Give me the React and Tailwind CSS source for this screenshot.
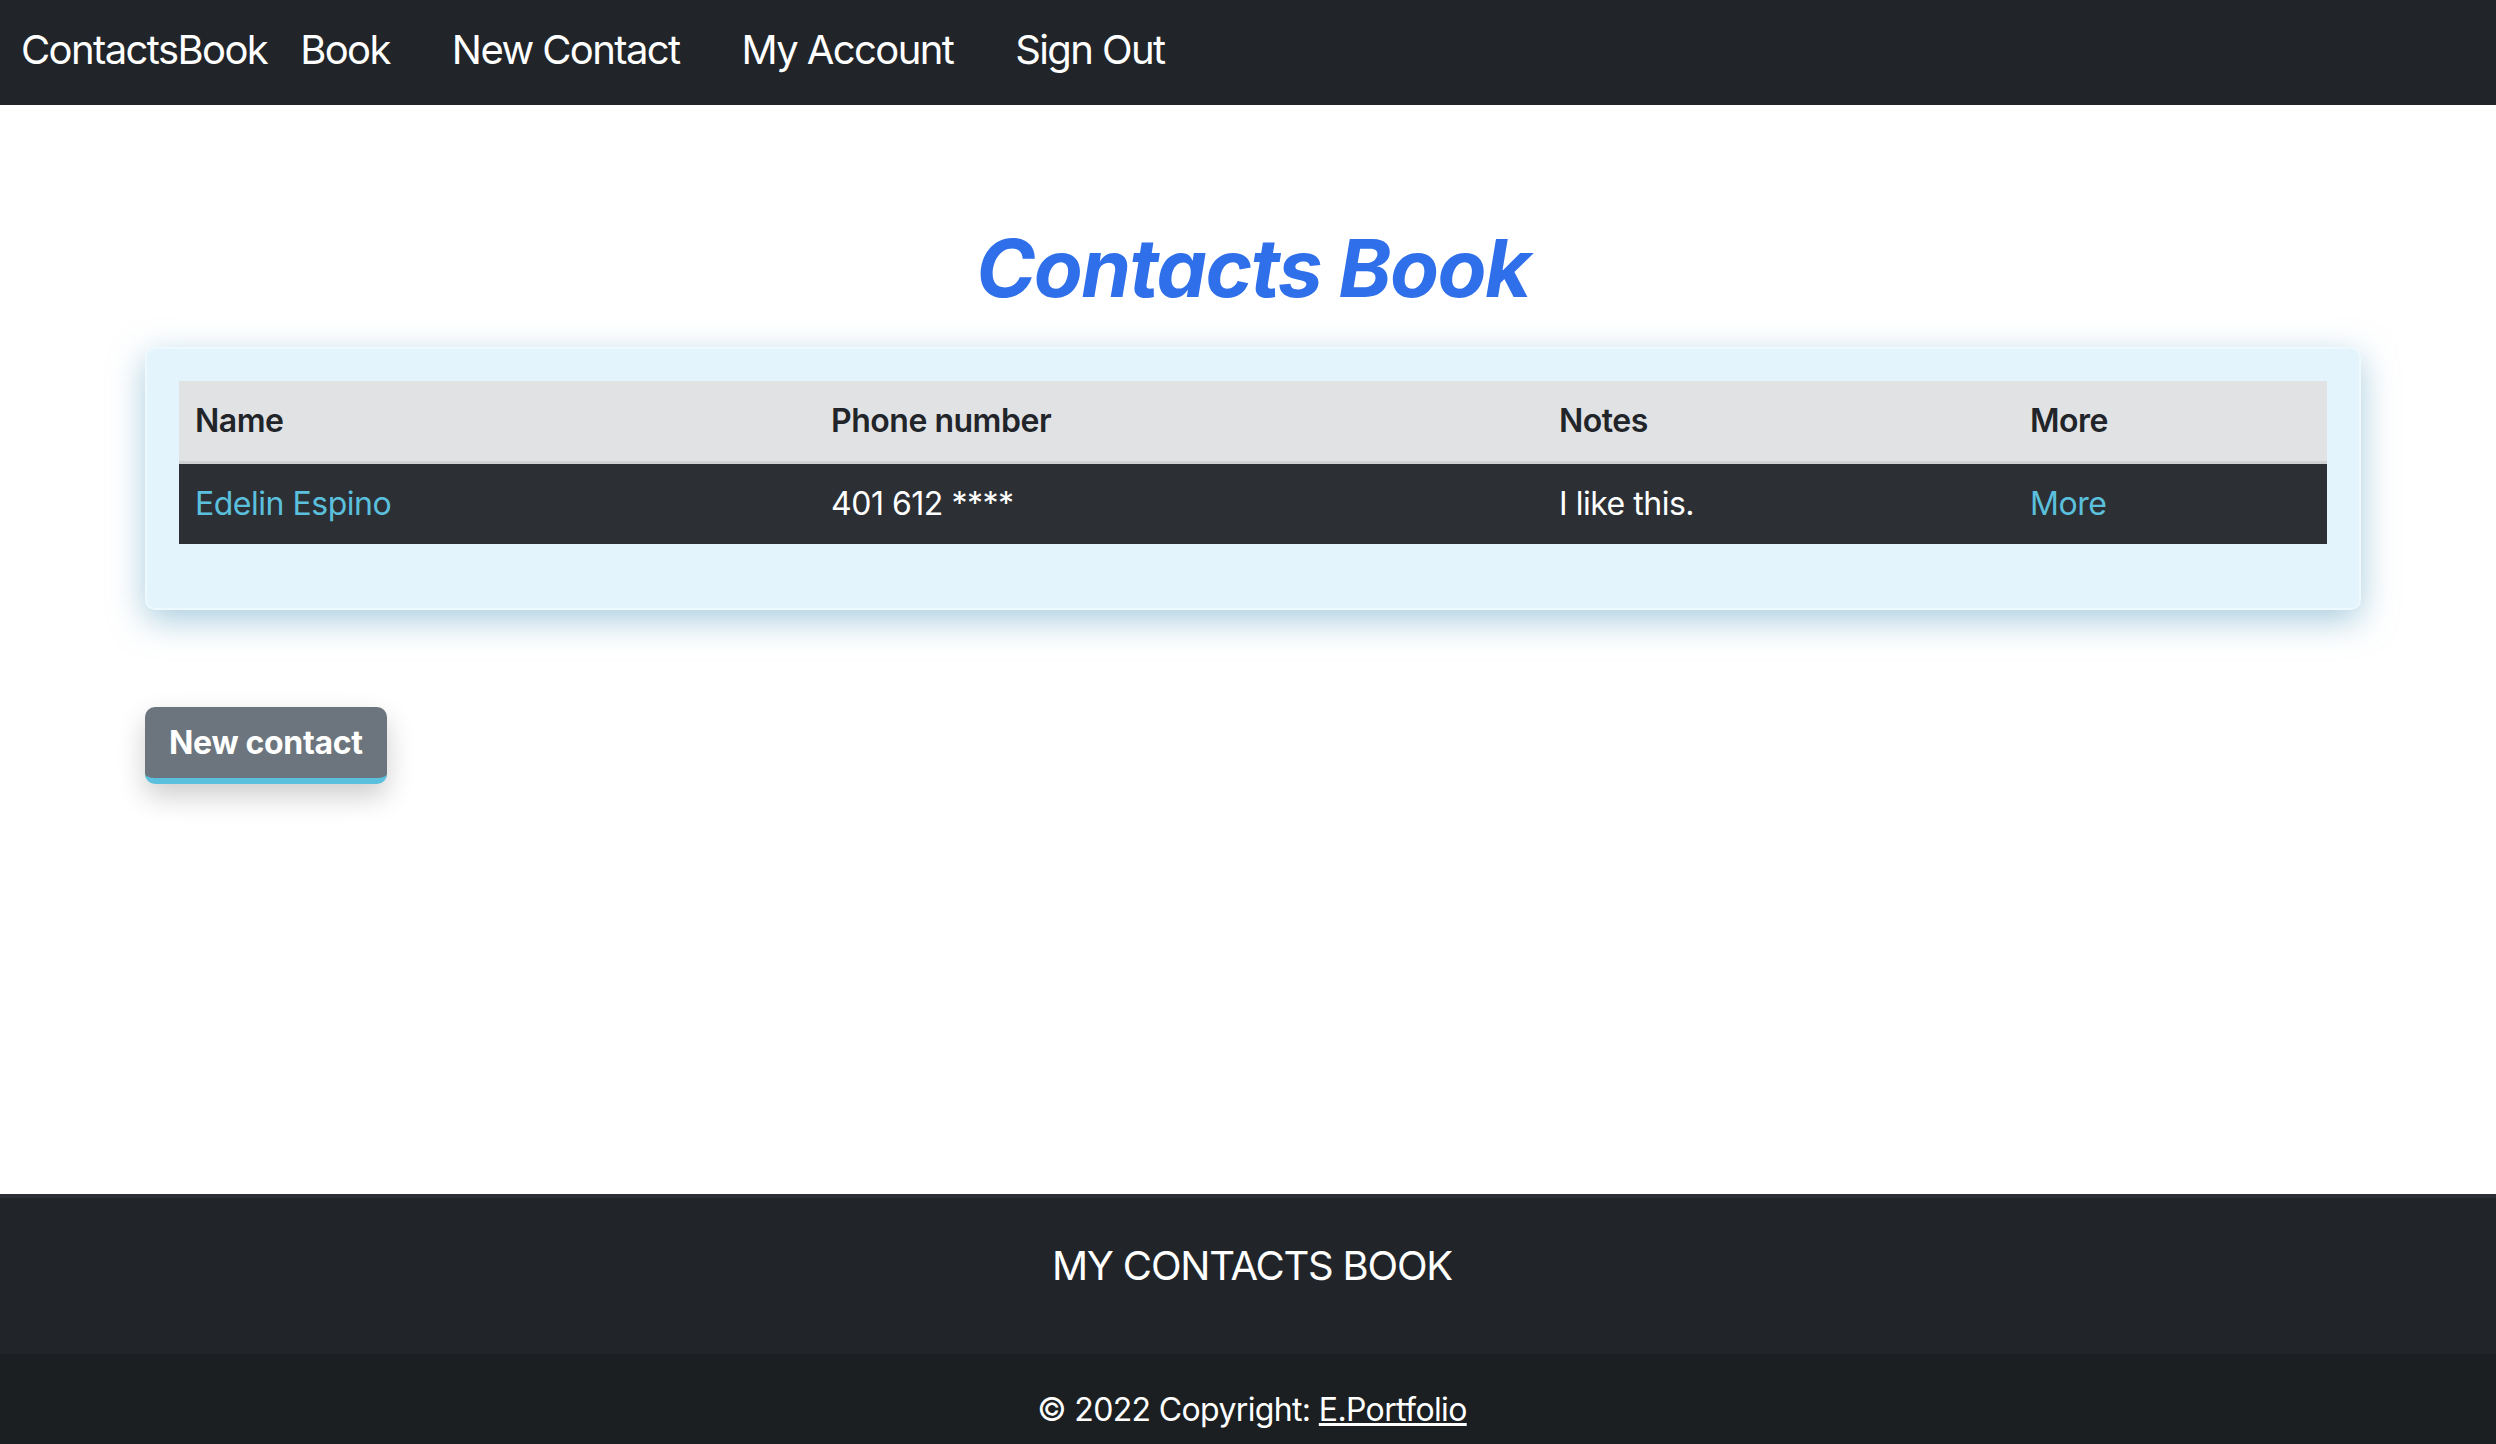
import React from "react";

const contacts = [
  { id: 1, name: "Edelin Espino", phone: "401 612 ****", notes: "I like this." },
];

export default function App() {
  return (
    <div className="min-h-screen bg-white font-['Inter','Liberation_Sans',sans-serif] text-[#212529]">
      <nav className="h-[105px] bg-[#212529] flex items-center pl-[21px] pb-[5px] text-white text-[40px] tracking-[-0.04em]">
        <a href="#" className="mr-[33px]">ContactsBook</a>
        <div className="flex items-center gap-[62px]">
          <a href="#">Book</a>
          <a href="#">New Contact</a>
          <a href="#">My Account</a>
          <a href="#">Sign Out</a>
        </div>
      </nav>

      <main className="min-h-[1089px] pt-[115px]">
        <div className="ml-[145px] w-[2216px]">
          <h1 className="text-center text-[80px] leading-[96px] font-bold italic text-[#2f6fea] tracking-[-0.02em]">
            Contacts Book
          </h1>

          <div className="mt-[31px] bg-[#e3f4fc] border-2 border-[#eef9fe] rounded-[10px] p-[32px] shadow-[0_10px_34px_rgba(110,170,200,0.6)]">
            <table className="w-full mb-[32px] text-[32px] leading-[48px] tracking-[-0.015em]">
              <thead>
                <tr className="bg-[#e1e2e4] border-b-[3px] border-[#cfd1d3]">
                  <th className="w-[636px] text-left font-semibold px-[16px] py-[16px]">Name</th>
                  <th className="w-[728px] text-left font-semibold px-[16px] py-[16px]">Phone number</th>
                  <th className="w-[471px] text-left font-semibold px-[16px] py-[16px]">Notes</th>
                  <th className="text-left font-semibold px-[16px] py-[16px]">More</th>
                </tr>
              </thead>
              <tbody>
                {contacts.map(c => (
                  <tr key={c.id} className="bg-[#2c3035] text-white">
                    <td className="px-[16px] py-[16px]">
                      <a href="#" className="text-[#5bc0de]">{c.name}</a>
                    </td>
                    <td className="px-[16px] py-[16px]">{c.phone}</td>
                    <td className="px-[16px] py-[16px]">{c.notes}</td>
                    <td className="px-[16px] py-[16px]">
                      <a href="#" className="text-[#5bc0de]">More</a>
                    </td>
                  </tr>
                ))}
              </tbody>
            </table>
          </div>

          <button className="mt-[97px] bg-[#6c757d] text-white text-[32px] leading-[48px] font-bold px-[24px] pt-[12px] pb-[11px] rounded-[10px] border-b-[6px] border-[#5bc0de] shadow-[0_12px_28px_rgba(0,0,0,0.2)] tracking-[-0.01em]">
            New contact
          </button>
        </div>
      </main>

      <footer className="text-white">
        <div className="bg-[#212529] border-t-[4px] border-[#2b2f33] pt-[44px] pb-[48px] pl-[8px] text-center">
          <h5 className="text-[40px] leading-[48px] mb-[16px] tracking-[-0.03em]">MY CONTACTS BOOK</h5>
        </div>
        <div className="bg-[#1c1f22] py-[32px] pl-[8px] text-center text-[32px] leading-[48px] tracking-[-0.02em]">
          © 2022 Copyright: <a href="#" className="underline">E.Portfolio</a>
        </div>
      </footer>
    </div>
  );
}
